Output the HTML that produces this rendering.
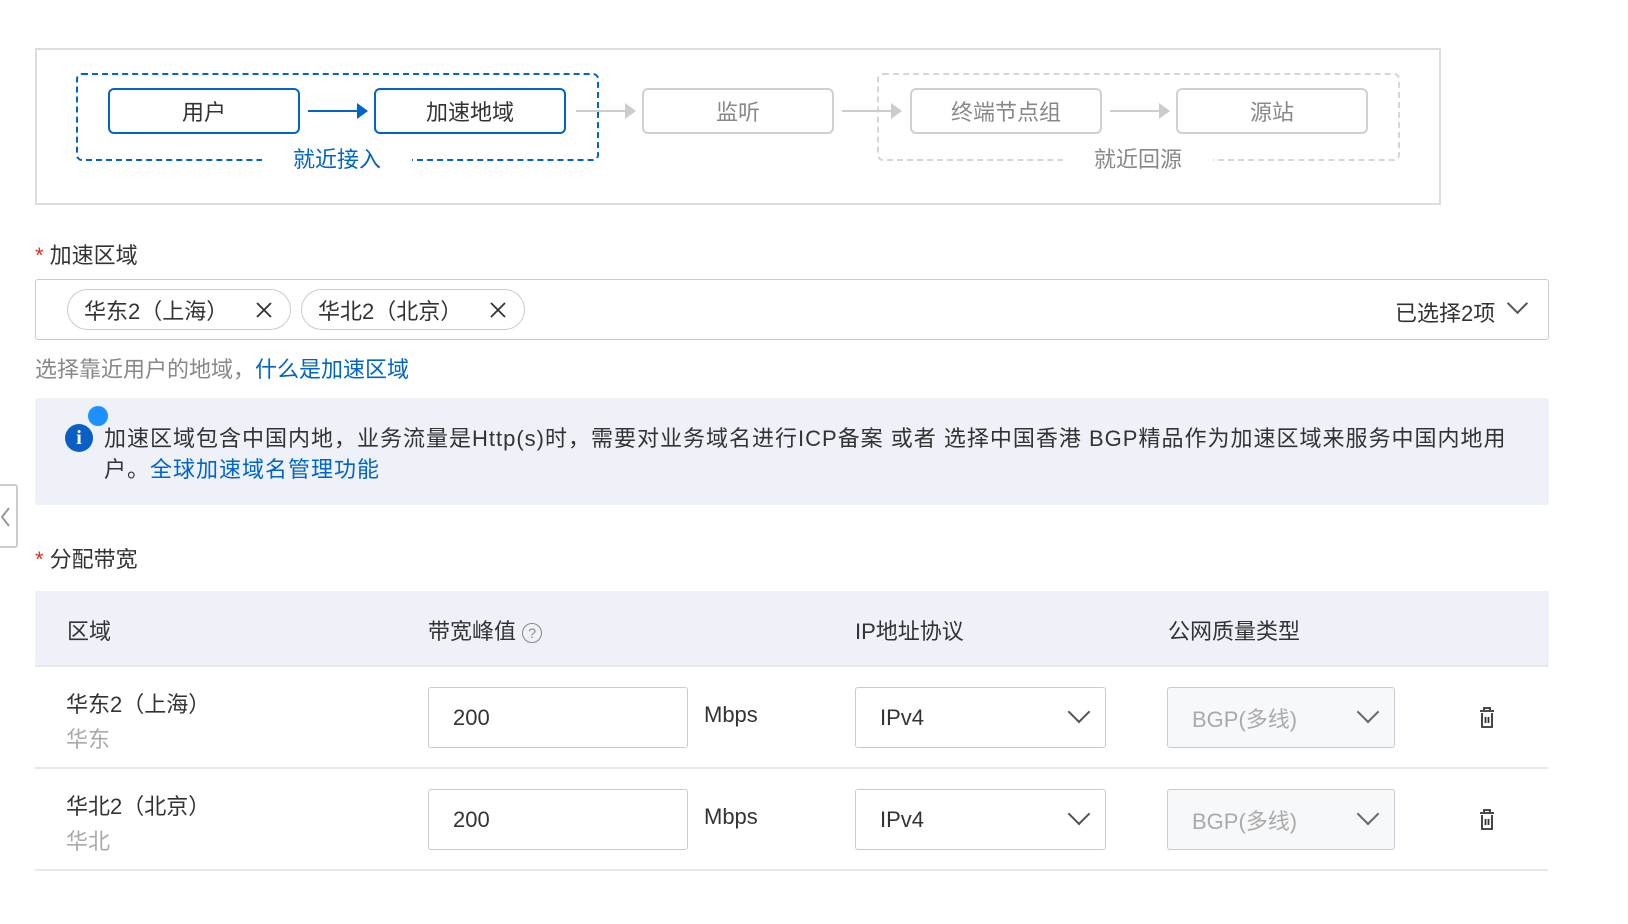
<!DOCTYPE html>
<html><head><meta charset="utf-8"><style>
*{box-sizing:border-box;margin:0;padding:0}
body{width:1628px;height:924px;background:#fff;position:relative;overflow:hidden;font-family:"Liberation Sans","Noto Sans CJK SC",sans-serif;color:#333;font-size:22px}
.a{position:absolute}
.box{position:absolute;height:46px;width:192px;border-radius:6px;display:flex;align-items:center;justify-content:center;font-size:22px}
.bl{border:2px solid #0064c8;color:#333}
.gr{border:2px solid #d0d0d0;color:#888}
.arr{position:absolute;height:2px}
.arr:after{content:"";position:absolute;right:-2px;top:-7px;border-left:11px solid;border-top:8px solid transparent;border-bottom:8px solid transparent;border-left-color:inherit}
.tag{position:absolute;top:289px;height:41px;border:1px solid #c8ccd2;border-radius:21px;display:flex;align-items:center;padding-left:16px;font-size:22px;color:#333}
.tag svg{position:absolute;right:18px;top:12px}
.inp{position:absolute;border:1.5px solid #c8ccd2;border-radius:3px;height:61px;display:flex;align-items:center;padding-left:24px;font-size:22px}
.chev{position:absolute;right:18px;top:16px;width:16px;height:16px;border-right:2px solid #555;border-bottom:2px solid #555;transform:rotate(45deg)}
.sep{position:absolute;left:35px;width:1513px;height:2px;background:#e6e8eb}
</style></head><body>
<div class="a" style="left:35px;top:48px;width:1406px;height:157px;border:2px solid #ddd"></div>
<div class="a" style="left:76px;top:73px;width:523px;height:88px;border:2px dashed #0064c8;border-radius:6px"></div>
<div class="a" style="left:877px;top:73px;width:523px;height:88px;border:2px dashed #d6d6d6;border-radius:6px"></div>
<div class="a" style="left:262px;top:148px;width:150px;height:24px;background:#fff;color:#0064c8;text-align:center;font-size:22px;line-height:24px">就近接入</div>
<div class="a" style="left:1063px;top:148px;width:150px;height:24px;background:#fff;color:#888;text-align:center;font-size:22px;line-height:24px">就近回源</div>
<div class="box bl" style="left:108px;top:88px">用户</div>
<div class="box bl" style="left:374px;top:88px">加速地域</div>
<div class="box gr" style="left:642px;top:88px">监听</div>
<div class="box gr" style="left:910px;top:88px">终端节点组</div>
<div class="box gr" style="left:1176px;top:88px">源站</div>
<div class="arr" style="left:308px;top:110px;width:58px;background:#0064c8;border-color:#0064c8"></div>
<div class="arr" style="left:576px;top:110px;width:58px;background:#ccc;border-color:#ccc"></div>
<div class="arr" style="left:842px;top:110px;width:58px;background:#ccc;border-color:#ccc"></div>
<div class="arr" style="left:1110px;top:110px;width:58px;background:#ccc;border-color:#ccc"></div>

<div class="a" style="left:35px;top:238px"><span style="color:#d93026">*</span> 加速区域</div>
<div class="a" style="left:35px;top:279px;width:1514px;height:61px;border:1.5px solid #c8ccd2;border-radius:3px"></div>
<div class="tag" style="left:67px;width:224px">华东2（上海）<svg width="16" height="16" viewBox="0 0 16 16"><path d="M1 1L15 15M15 1L1 15" stroke="#333" stroke-width="1.8"/></svg></div>
<div class="tag" style="left:301px;width:224px">华北2（北京）<svg width="16" height="16" viewBox="0 0 16 16"><path d="M1 1L15 15M15 1L1 15" stroke="#333" stroke-width="1.8"/></svg></div>
<div class="a" style="left:1395px;top:296px">已选择2项</div>
<div class="a" style="left:1510px;top:296px;width:15px;height:15px;border-right:2px solid #555;border-bottom:2px solid #555;transform:rotate(45deg)"></div>
<div class="a" style="left:35px;top:352px;color:#888">选择靠近用户的地域，<span style="color:#0064c8">什么是加速区域</span></div>

<div class="a" style="left:35px;top:398px;width:1514px;height:107px;background:#eef1f8;border-radius:3px"></div>
<div class="a" style="left:65px;top:424px;width:28px;height:28px;border-radius:50%;background:#0a5fc4;color:#fff;font-weight:bold;font-size:20px;text-align:center;line-height:28px;font-family:'Liberation Serif',serif">i</div>
<div class="a" style="left:88px;top:406px;width:20px;height:20px;border-radius:50%;background:#1e8fff"></div>
<div class="a" style="left:104px;top:423px;width:1440px;line-height:31px;letter-spacing:1px;white-space:nowrap">加速区域包含中国内地，业务流量是Http(s)时，需要对业务域名进行ICP备案 或者 选择中国香港 BGP精品作为加速区域来服务中国内地用<br>户。<span style="color:#0064c8">全球加速域名管理功能</span></div>
<div class="a" style="left:-3px;top:484px;width:21px;height:64px;border:2px solid #ccc;border-radius:3px;background:#fff"><svg width="18" height="60" viewBox="0 0 18 60"><path d="M10 22L3 31L10 40" stroke="#999" stroke-width="2" fill="none"/></svg></div>

<div class="a" style="left:35px;top:542px"><span style="color:#d93026">*</span> 分配带宽</div>
<div class="a" style="left:35px;top:591px;width:1514px;height:75px;background:#eef1f8"></div>
<div class="a" style="left:67px;top:614px">区域</div>
<div class="a" style="left:428px;top:614px">带宽峰值 <span style="display:inline-block;width:20px;height:20px;border:1.5px solid #888;border-radius:50%;font-size:14px;text-align:center;line-height:18px;color:#888;vertical-align:middle">?</span></div>
<div class="a" style="left:855px;top:614px">IP地址协议</div>
<div class="a" style="left:1168px;top:614px">公网质量类型</div>
<div class="sep" style="top:665px"></div>

<div class="a" style="left:66px;top:687px">华东2（上海）</div>
<div class="a" style="left:66px;top:722px;color:#aaa">华东</div>
<div class="inp" style="left:428px;top:687px;width:260px">200</div>
<div class="a" style="left:704px;top:702px">Mbps</div>
<div class="inp" style="left:855px;top:687px;width:251px">IPv4<div class="chev"></div></div>
<div class="inp" style="left:1167px;top:687px;width:228px;background:#f7f8fa;color:#aaa">BGP(多线)<div class="chev" style="border-color:#666"></div></div>
<svg class="a" style="left:1479px;top:707px" width="16" height="22" viewBox="0 0 16 22"><path d="M5 3V1H11V3M1 4H15M3 6V20H13V6M6.5 10V16M9.5 10V16" stroke="#333" stroke-width="1.8" fill="none"/></svg>
<div class="sep" style="top:767px"></div>

<div class="a" style="left:66px;top:789px">华北2（北京）</div>
<div class="a" style="left:66px;top:824px;color:#aaa">华北</div>
<div class="inp" style="left:428px;top:789px;width:260px">200</div>
<div class="a" style="left:704px;top:804px">Mbps</div>
<div class="inp" style="left:855px;top:789px;width:251px">IPv4<div class="chev"></div></div>
<div class="inp" style="left:1167px;top:789px;width:228px;background:#f7f8fa;color:#aaa">BGP(多线)<div class="chev" style="border-color:#666"></div></div>
<svg class="a" style="left:1479px;top:809px" width="16" height="22" viewBox="0 0 16 22"><path d="M5 3V1H11V3M1 4H15M3 6V20H13V6M6.5 10V16M9.5 10V16" stroke="#333" stroke-width="1.8" fill="none"/></svg>
<div class="sep" style="top:869px"></div>
</body></html>
